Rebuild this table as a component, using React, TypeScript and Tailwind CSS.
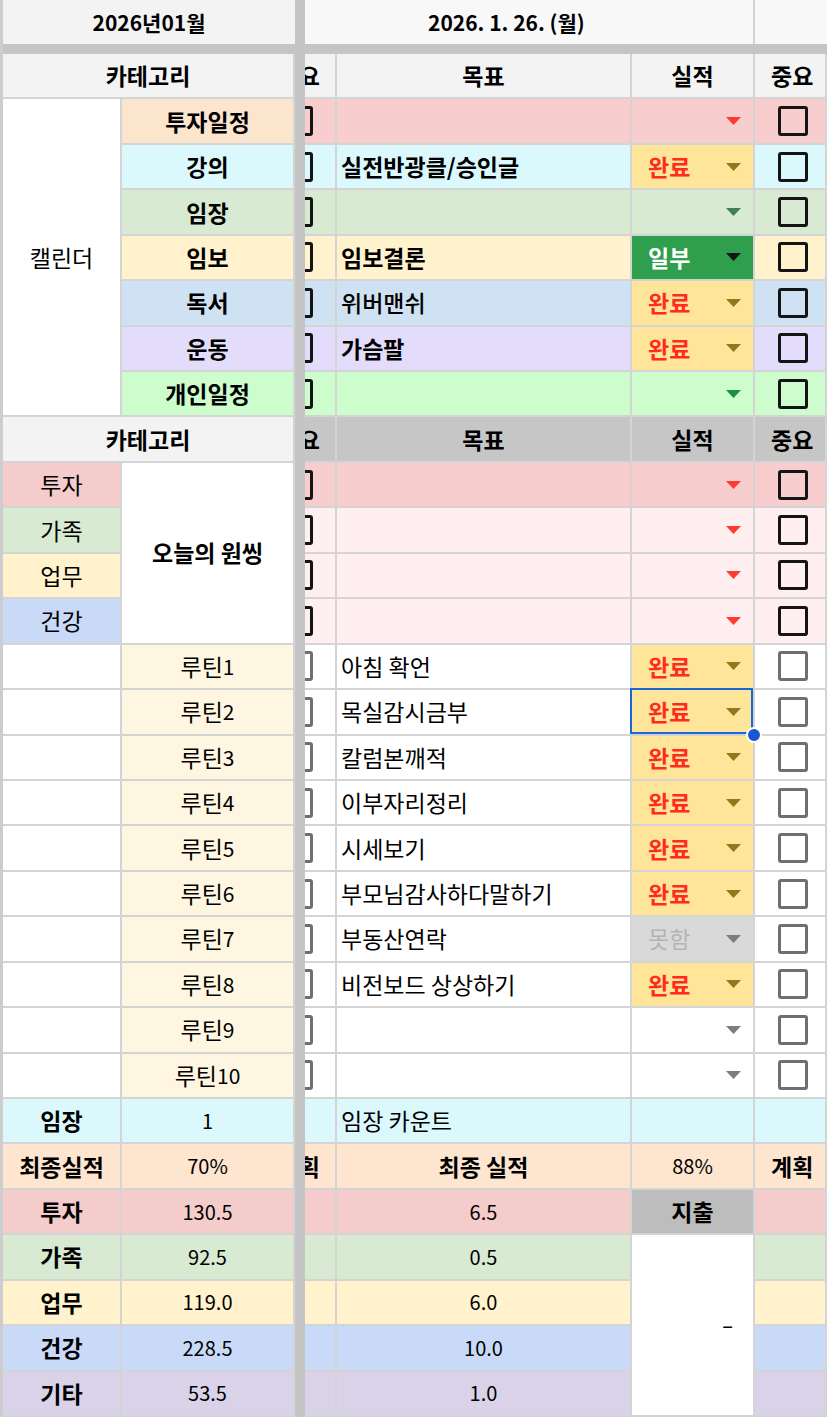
import React from 'react';
import clsx from 'clsx';

// 시트 캡처 재현: 틀 고정선(회색 띠) + 셀 그리드

type Tone = 'red' | 'olive' | 'green' | 'lime' | 'dark' | 'gray';

const triFill: Record<Tone, string> = {
  red: '#ff3b2f',
  olive: '#8c7a1e',
  green: '#3f7f52',
  lime: '#1f9040',
  dark: '#151515',
  gray: '#7d7d7d',
};

const Tri = ({ tone }: { tone: Tone }) => (
  <svg width="15" height="8" viewBox="0 0 15 8" className="ml-auto shrink-0">
    <path d="M0 0H15L7.5 8Z" fill={triFill[tone]} />
  </svg>
);

const Box = ({ dark, clip }: { dark?: boolean; clip?: boolean }) => (
  <div
    className={clsx(
      'w-[30px] h-[30px] shrink-0 rounded-[3px] border-[3px]',
      dark ? 'border-[#141414]' : 'border-[#6f6f6f]',
      clip && '-ml-[22px]'
    )}
  />
);

const Cell = ({ className, children }: { className?: string; children?: React.ReactNode }) => (
  <div className={clsx('flex items-center min-w-0 border-r-2 border-b-2 border-[#d4d4d4]', className)}>
    {children}
  </div>
);

type Status = { label?: string; bg: string; text?: string; tone: Tone };

const done: Status = { label: '완료', bg: 'bg-[#ffe59a]', text: 'text-[#ff2b1c] font-bold', tone: 'olive' };

const calendar: { cat: string; catBg: string; rowBg: string; goal: string; goalWeight: string; st: Status }[] = [
  { cat: '투자일정', catBg: 'bg-[#fce5cd]', rowBg: 'bg-[#f7cdcd]', goal: '', goalWeight: 'font-bold', st: { bg: 'bg-[#f7cdcd]', tone: 'red' } },
  { cat: '강의', catBg: 'bg-[#dbf8fc]', rowBg: 'bg-[#dbf8fc]', goal: '실전반광클/승인글', goalWeight: 'font-bold', st: done },
  { cat: '임장', catBg: 'bg-[#d9ead3]', rowBg: 'bg-[#d9ead3]', goal: '', goalWeight: 'font-bold', st: { bg: 'bg-[#d9ead3]', tone: 'green' } },
  { cat: '임보', catBg: 'bg-[#fff2cc]', rowBg: 'bg-[#fff2cc]', goal: '임보결론', goalWeight: 'font-bold', st: { label: '일부', bg: 'bg-[#2f9e4d]', text: 'text-white font-bold', tone: 'dark' } },
  { cat: '독서', catBg: 'bg-[#cfe2f3]', rowBg: 'bg-[#cfe2f3]', goal: '위버맨쉬', goalWeight: 'font-medium', st: done },
  { cat: '운동', catBg: 'bg-[#e4dcfb]', rowBg: 'bg-[#e4dcfb]', goal: '가슴팔', goalWeight: 'font-bold', st: done },
  { cat: '개인일정', catBg: 'bg-[#cdfccd]', rowBg: 'bg-[#cdfccd]', goal: '', goalWeight: 'font-bold', st: { bg: 'bg-[#cdfccd]', tone: 'lime' } },
];

const oneThing = [
  { cat: '투자', catBg: 'bg-[#f4cccc]', rowBg: 'bg-[#f7cdcd]' },
  { cat: '가족', catBg: 'bg-[#d9ead3]', rowBg: 'bg-[#ffeff0]' },
  { cat: '업무', catBg: 'bg-[#fff2cc]', rowBg: 'bg-[#ffeff0]' },
  { cat: '건강', catBg: 'bg-[#c9daf8]', rowBg: 'bg-[#ffeff0]' },
];

const missed: Status = { label: '못함', bg: 'bg-[#d9d9d9]', text: 'text-[#b3b3b3]', tone: 'gray' };
const empty: Status = { bg: 'bg-white', tone: 'gray' };

const routines: { goal: string; st: Status }[] = [
  { goal: '아침 확언', st: done },
  { goal: '목실감시금부', st: done },
  { goal: '칼럼본깨적', st: done },
  { goal: '이부자리정리', st: done },
  { goal: '시세보기', st: done },
  { goal: '부모님감사하다말하기', st: done },
  { goal: '부동산연락', st: missed },
  { goal: '비전보드 상상하기', st: done },
  { goal: '', st: empty },
  { goal: '', st: empty },
];

const totals = [
  { cat: '가족', bg: 'bg-[#d9ead3]', a: '92.5', b: '0.5' },
  { cat: '업무', bg: 'bg-[#fff2cc]', a: '119.0', b: '6.0' },
  { cat: '건강', bg: 'bg-[#c9daf8]', a: '228.5', b: '10.0' },
  { cat: '기타', bg: 'bg-[#d9d2e9]', a: '53.5', b: '1.0' },
];

const StatusCell = ({ st, selected }: { st: Status; selected?: boolean }) => (
  <Cell className={clsx('pl-[16px] pr-[12px]', st.bg, selected && 'relative')}>
    {st.label && <span className={st.text}>{st.label}</span>}
    <Tri tone={st.tone} />
    {selected && (
      <>
        <div className="absolute -left-[2px] -top-[2px] right-0 bottom-0 border-2 border-[#1a66d6]" />
        <div className="absolute -right-[9px] -bottom-[9px] z-10 w-[16px] h-[16px] rounded-full bg-[#1a56d0] border-2 border-white" />
      </>
    )}
  </Cell>
);

const HeaderRow = ({ right }: { right: string }) => (
  <>
    <Cell className="col-span-2 justify-center bg-[#f3f3f3] font-bold">카테고리</Cell>
    <Cell className={clsx('justify-end pr-[15px] overflow-hidden font-bold', right)}>
      <span className="shrink-0">중요</span>
    </Cell>
    <Cell className={clsx('justify-center font-bold', right)}>목표</Cell>
    <Cell className={clsx('justify-center font-bold', right)}>실적</Cell>
    <Cell className={clsx('pl-[16px] font-bold', right)}>
      <span className="shrink-0">중요</span>
    </Cell>
  </>
);

export default function App() {
  return (
    <div
      className="w-[827px] h-[1417px] overflow-hidden bg-white border-l-[3px] border-[#cdcdcd] text-[23px] leading-none text-black"
      style={{ fontFamily: '"Noto Sans CJK KR", "Noto Sans", sans-serif' }}
    >
      <div className="grid h-full grid-cols-[119px_173px_10px_32px_295px_123px_72px] grid-rows-[44px_10px_repeat(30,minmax(0,1fr))]">
        {/* 틀 고정선 */}
        <div className="col-start-3 row-start-1 row-span-32 bg-[#c5c5c5]" />
        <div className="col-start-1 col-span-7 row-start-2 bg-[#c5c5c5]" />

        {/* 날짜 행 */}
        <div className="col-span-2 flex items-center justify-center bg-[#f3f3f3] font-bold text-[21px]">2026년01월</div>
        <div className="col-span-3 flex items-center pl-[123px] bg-[#f8f8f8] border-r-2 border-[#d4d4d4] font-bold text-[21px]">
          2026. 1. 26. (월)
        </div>
        <div className="bg-[#f8f8f8]" />

        <HeaderRow right="bg-[#f3f3f3]" />

        {/* 캘린더 */}
        {calendar.map((r, i) => (
          <React.Fragment key={r.cat}>
            {i === 0 && <Cell className="row-span-7 justify-center bg-white">캘린더</Cell>}
            <Cell className={clsx('justify-center font-bold', r.catBg)}>{r.cat}</Cell>
            <Cell className={clsx('overflow-hidden', r.rowBg)}>
              <Box dark clip />
            </Cell>
            <Cell className={clsx('pl-[4px]', r.goalWeight, r.rowBg)}>{r.goal}</Cell>
            <StatusCell st={r.st} />
            <Cell className={clsx('pl-[23px]', r.rowBg)}>
              <Box dark />
            </Cell>
          </React.Fragment>
        ))}

        <HeaderRow right="bg-[#c6c6c6]" />

        {/* 오늘의 원씽 */}
        {oneThing.map((r, i) => (
          <React.Fragment key={r.cat}>
            <Cell className={clsx('justify-center', r.catBg)}>{r.cat}</Cell>
            {i === 0 && <Cell className="row-span-4 justify-center bg-white font-bold">오늘의 원씽</Cell>}
            <Cell className={clsx('overflow-hidden', r.rowBg)}>
              <Box dark clip />
            </Cell>
            <Cell className={r.rowBg} />
            <StatusCell st={{ bg: r.rowBg, tone: 'red' }} />
            <Cell className={clsx('pl-[23px]', r.rowBg)}>
              <Box dark />
            </Cell>
          </React.Fragment>
        ))}

        {/* 루틴 */}
        {routines.map((r, i) => (
          <React.Fragment key={i}>
            <Cell className="bg-white" />
            <Cell className="justify-center bg-[#fef6e0]">
              루틴<span className="text-[21px]">{i + 1}</span>
            </Cell>
            <Cell className="overflow-hidden bg-white">
              <Box clip />
            </Cell>
            <Cell className="pl-[4px] bg-white">{r.goal}</Cell>
            <StatusCell st={r.st} selected={i === 1} />
            <Cell className="pl-[23px] bg-white">
              <Box />
            </Cell>
          </React.Fragment>
        ))}

        {/* 임장 카운트 */}
        <Cell className="justify-center bg-[#dbf8fc] font-bold">임장</Cell>
        <Cell className="justify-center bg-[#dbf8fc] text-[20px]">1</Cell>
        <Cell className="bg-[#dbf8fc]" />
        <Cell className="pl-[4px] bg-[#dbf8fc]">임장 카운트</Cell>
        <Cell className="bg-[#dbf8fc]" />
        <Cell className="bg-[#dbf8fc]" />

        {/* 최종 실적 */}
        <Cell className="justify-center bg-[#fde5cf] font-bold">최종실적</Cell>
        <Cell className="justify-center bg-[#fde5cf] text-[20px]">70%</Cell>
        <Cell className="justify-end pr-[15px] overflow-hidden bg-[#fde5cf] font-bold">
          <span className="shrink-0">계획</span>
        </Cell>
        <Cell className="justify-center bg-[#fde5cf] font-bold">최종 실적</Cell>
        <Cell className="justify-center bg-[#fde5cf] text-[20px]">88%</Cell>
        <Cell className="pl-[16px] bg-[#fde5cf] font-bold">
          <span className="shrink-0">계획</span>
        </Cell>

        <Cell className="justify-center bg-[#f4cccc] font-bold">투자</Cell>
        <Cell className="justify-center bg-[#f4cccc] text-[20px]">130.5</Cell>
        <Cell className="bg-[#f4cccc]" />
        <Cell className="justify-center bg-[#f4cccc] text-[20px]">6.5</Cell>
        <Cell className="justify-center bg-[#bdbdbd] font-bold">지출</Cell>
        <Cell className="bg-[#f4cccc]" />

        {totals.map((r, i) => (
          <React.Fragment key={r.cat}>
            <Cell className={clsx('justify-center font-bold', r.bg)}>{r.cat}</Cell>
            <Cell className={clsx('justify-center text-[20px]', r.bg)}>{r.a}</Cell>
            <Cell className={r.bg} />
            <Cell className={clsx('justify-center text-[20px]', r.bg)}>{r.b}</Cell>
            {i === 0 && (
              <Cell className="row-span-4 justify-end pr-[20px] bg-white text-[20px] font-medium">–</Cell>
            )}
            <Cell className={r.bg} />
          </React.Fragment>
        ))}
      </div>
    </div>
  );
}
